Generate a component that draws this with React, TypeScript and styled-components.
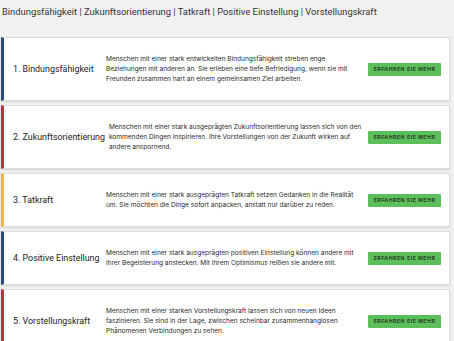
import React from "react";
import styled, { createGlobalStyle } from "styled-components";

const Global = createGlobalStyle`
  html, body { margin: 0; padding: 0; background: #f1f1f1; }
  body { font-family: Roboto, "Noto Sans", "Liberation Sans", sans-serif; color: #222; overflow: hidden; }
`;

const Page = styled.div`
  width: 454px;
  height: 341px;
  padding: 0 4px 0 1px;
  box-sizing: border-box;
  overflow: hidden;
`;

const Nav = styled.div`
  padding: 5px 0 0 1px;
  height: 37px;
  box-sizing: border-box;
  font-size: 9.4px;
  line-height: 14px;
  color: #333;
  white-space: nowrap;
`;

const List = styled.div`
  display: flex;
  flex-direction: column;
  gap: 4px;
`;

const Card = styled.div<{ $accent: string }>`
  display: flex;
  align-items: center;
  box-sizing: border-box;
  padding: 16px 8px 16px 9px;
  background: #fff;
  border: 1px solid #dedede;
  border-left: 3px solid ${(p) => p.$accent};
  box-shadow: 0 1px 2px rgba(0, 0, 0, 0.12);
`;

const Title = styled.div`
  flex-shrink: 0;
  min-width: 89px;
  margin-right: 4px;
  font-size: 8.9px;
  color: #222;
  white-space: nowrap;
`;

const Desc = styled.p`
  flex: 1;
  min-width: 0;
  margin: 0;
  font-family: Inter, Roboto, sans-serif;
  font-size: 6.55px;
  line-height: 10px;
  color: #2a2a2a;
`;

const Line = styled.span`
  display: block;
  white-space: nowrap;
`;

const Button = styled.button`
  flex-shrink: 0;
  margin-left: 4px;
  width: 73px;
  height: 13px;
  padding: 0;
  border: none;
  border-radius: 1px;
  background: #5cbf5c;
  color: #2a4327;
  font-family: Inter, Roboto, sans-serif;
  font-size: 5.2px;
  font-weight: 700;
  letter-spacing: 0.5px;
  text-transform: uppercase;
`;

const items = [
  {
    title: "1. Bindungsfähigkeit",
    accent: "#2b4d7b",
    lines: [
      "Menschen mit einer stark entwickelten Bindungsfähigkeit streben enge",
      "Beziehungen mit anderen an. Sie erleben eine tiefe Befriedigung, wenn sie mit",
      "Freunden zusammen hart an einem gemeinsamen Ziel arbeiten.",
    ],
  },
  {
    title: "2. Zukunftsorientierung",
    accent: "#b8343e",
    lines: [
      "Menschen mit einer stark ausgeprägten Zukunftsorientierung lassen sich von den",
      "kommenden Dingen inspirieren. Ihre Vorstellungen von der Zukunft wirken auf",
      "andere anspornend.",
    ],
  },
  {
    title: "3. Tatkraft",
    accent: "#f0b44c",
    lines: [
      "Menschen mit einer stark ausgeprägten Tatkraft setzen Gedanken in die Realität",
      "um. Sie möchten die Dinge sofort anpacken, anstatt nur darüber zu reden.",
    ],
  },
  {
    title: "4. Positive Einstellung",
    accent: "#2b4d7b",
    lines: [
      "Menschen mit einer stark ausgeprägten positiven Einstellung können andere mit",
      "ihrer Begeisterung anstecken. Mit ihrem Optimismus reißen sie andere mit.",
    ],
  },
  {
    title: "5. Vorstellungskraft",
    accent: "#b8343e",
    lines: [
      "Menschen mit einer starken Vorstellungskraft lassen sich von neuen Ideen",
      "faszinieren. Sie sind in der Lage, zwischen scheinbar zusammenhanglosen",
      "Phänomenen Verbindungen zu sehen.",
    ],
  },
];

export default function App() {
  return (
    <Page>
      <Global />
      <Nav>Bindungsfähigkeit | Zukunftsorientierung | Tatkraft | Positive Einstellung | Vorstellungskraft</Nav>
      <List>
        {items.map((it) => (
          <Card key={it.title} $accent={it.accent}>
            <Title>{it.title}</Title>
            <Desc>
              {it.lines.map((l) => (
                <Line key={l}>{l}</Line>
              ))}
            </Desc>
            <Button>Erfahren Sie mehr</Button>
          </Card>
        ))}
      </List>
    </Page>
  );
}
